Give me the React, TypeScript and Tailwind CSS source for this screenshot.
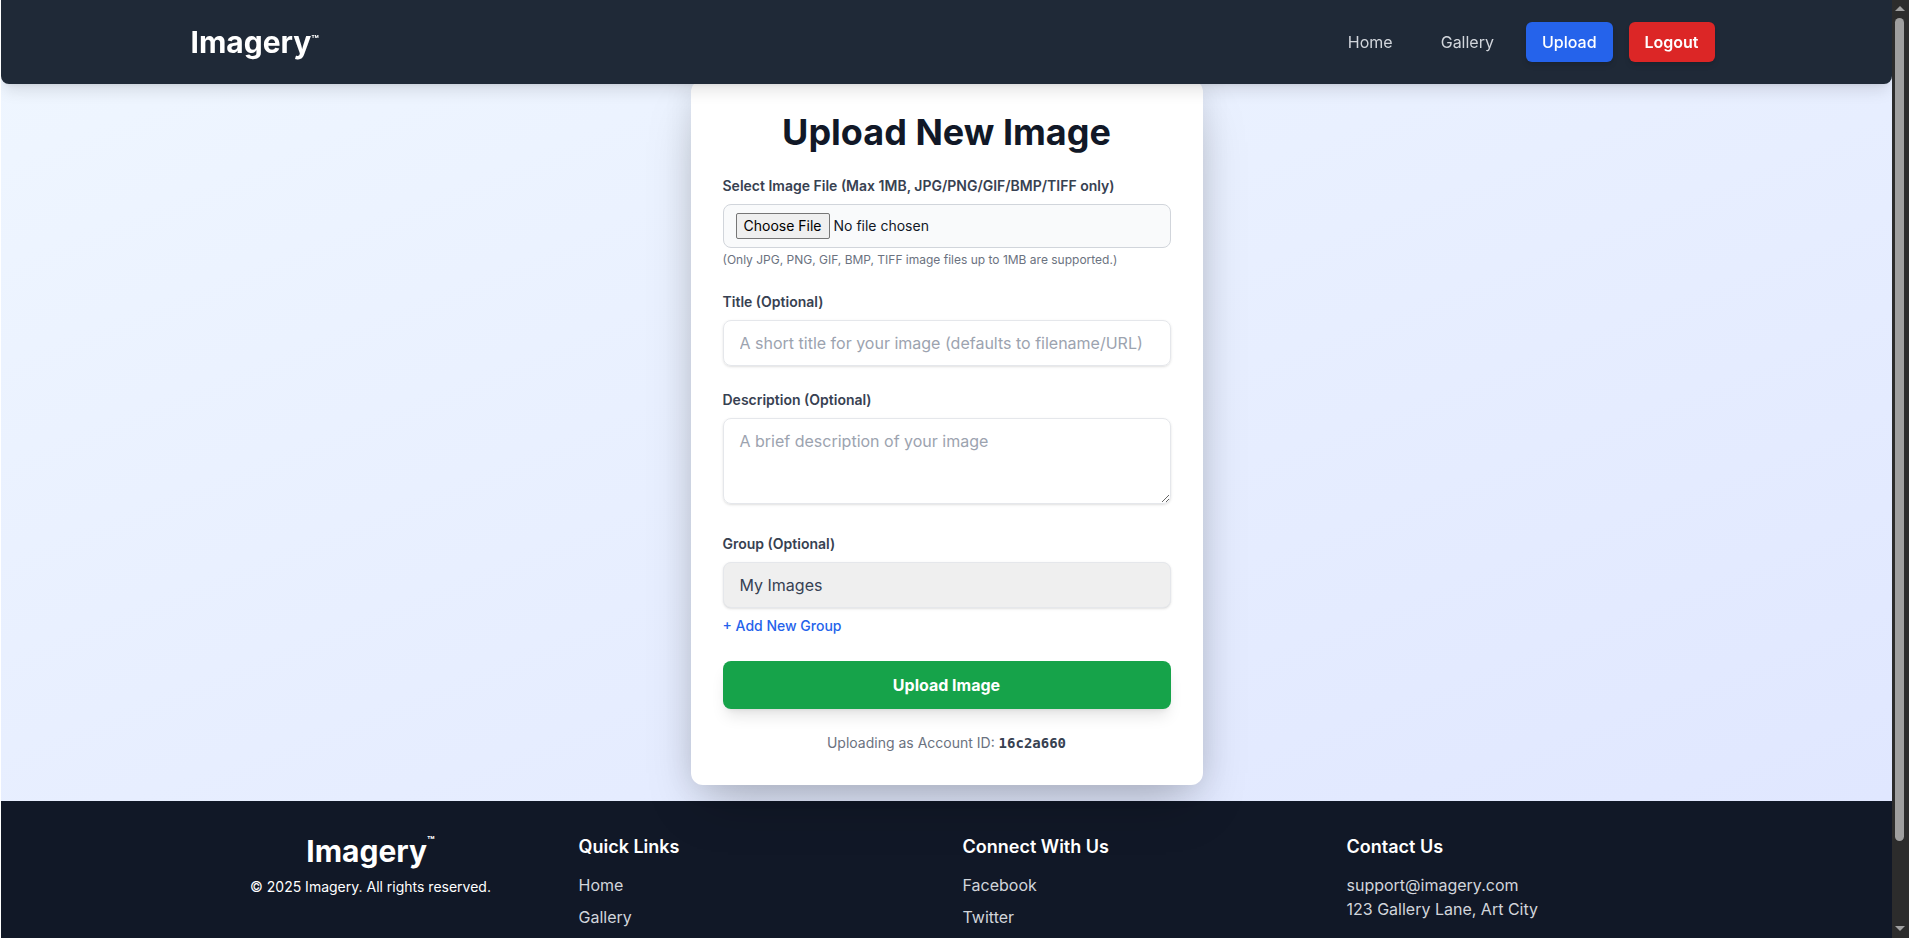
import type { ReactNode } from "react";

const field =
  "w-full rounded-lg border border-[#e5e7eb] px-4 py-3 text-base leading-5 text-gray-700 shadow-[0_1px_3px_0_rgba(0,0,0,0.1),0_1px_2px_-1px_rgba(0,0,0,0.1)] placeholder:text-[#9ca3af]";

function Label({ htmlFor, children }: { htmlFor: string; children: ReactNode }) {
  return (
    <label htmlFor={htmlFor} className="mb-2 block text-sm font-semibold text-[#374151]">
      {children}
    </label>
  );
}

function Header() {
  return (
    <header className="sticky top-0 z-10 rounded-b-lg bg-[#1f2937] py-[22px] shadow-[0_10px_15px_-3px_rgba(0,0,0,0.1),0_4px_6px_-4px_rgba(0,0,0,0.1)]">
      <div className="mx-auto flex max-w-[1536px] items-center justify-between">
        <a href="#" className="flex items-center px-3 text-3xl font-bold text-white">
          Imagery<span className="pb-1 text-xs leading-3">™</span>
        </a>
        <nav className="flex items-center gap-4 text-base">
          <a href="#home" className="rounded-md px-4 py-2 text-[#d1d5db]">Home</a>
          <a href="#gallery" className="rounded-md px-4 py-2 text-[#d1d5db]">Gallery</a>
          <a href="#upload" className="rounded-md bg-[#2563eb] px-4 py-2 font-medium text-white shadow-md">Upload</a>
          <button type="button" className="rounded-md bg-[#dc2626] px-4 py-2 font-semibold text-white shadow-md">Logout</button>
        </nav>
      </div>
    </header>
  );
}

function UploadCard() {
  return (
    <section className="w-full max-w-lg rounded-xl bg-white p-8 shadow-[0_25px_50px_-12px_rgba(0,0,0,0.25),0_0_30px_0_rgba(0,0,0,0.08)]">
      <h1 className="mb-6 text-center text-4xl font-bold text-[#111827]">Upload New Image</h1>
      <form className="flex flex-col gap-6">
        <div>
          <Label htmlFor="file">Select Image File (Max 1MB, JPG/PNG/GIF/BMP/TIFF only)</Label>
          <input
            id="file"
            type="file"
            className="block w-full rounded-lg border border-[#d1d5db] bg-[#f9fafb] px-3 py-2 text-sm text-[#111827] file:mr-1 file:rounded-[2px] file:border file:border-[#767676] file:bg-[#efefef] file:px-[7px] file:py-[2px] file:text-black"
          />
          <p className="mt-1 text-xs text-[#6b7280]">
            (Only JPG, PNG, GIF, BMP, TIFF image files up to 1MB are supported.)
          </p>
        </div>
        <div>
          <Label htmlFor="title">Title (Optional)</Label>
          <input id="title" type="text" placeholder="A short title for your image (defaults to filename/URL)" className={`block ${field}`} />
        </div>
        <div className="pb-[6px]">
          <Label htmlFor="description">Description (Optional)</Label>
          <textarea id="description" rows={3} placeholder="A brief description of your image" className={`block ${field}`} />
        </div>
        <div>
          <Label htmlFor="group">Group (Optional)</Label>
          <select id="group" className={`block appearance-none bg-[#efefef] ${field}`}>
            <option>My Images</option>
          </select>
          <button type="button" className="mt-2 block pb-px text-sm font-medium text-[#2563eb]">+ Add New Group</button>
        </div>
        <button
          type="submit"
          className="w-full rounded-lg bg-[#16a34a] py-3 text-base font-bold text-white shadow-[0_10px_15px_-3px_rgba(0,0,0,0.1),0_4px_6px_-4px_rgba(0,0,0,0.1)]"
        >
          Upload Image
        </button>
      </form>
      <p className="mt-6 text-center text-sm text-[#6b7280]">
        Uploading as Account ID:{" "}
        <span className="font-['DejaVu_Sans_Mono',monospace] font-bold text-[#374151]">16c2a660</span>
      </p>
    </section>
  );
}

function LinkColumn({ title, links }: { title: string; links: string[] }) {
  return (
    <div>
      <h2 className="mb-3 text-lg font-semibold">{title}</h2>
      <ul className="space-y-2">
        {links.map((link) => (
          <li key={link}>
            <a href="#" className="text-[#d1d5db]">{link}</a>
          </li>
        ))}
      </ul>
    </div>
  );
}

function Footer() {
  return (
    <footer className="bg-[#111827] py-8 text-white">
      <div className="mx-auto grid max-w-[1536px] grid-cols-4 gap-8 px-4">
        <div className="text-center">
          <div className="flex justify-center text-3xl font-bold">
            Imagery<span className="text-xs leading-4">™</span>
          </div>
          <p className="mt-2 text-sm">© 2025 Imagery. All rights reserved.</p>
        </div>
        <LinkColumn title="Quick Links" links={["Home", "Gallery"]} />
        <LinkColumn title="Connect With Us" links={["Facebook", "Twitter"]} />
        <div>
          <h2 className="mb-3 text-lg font-semibold">Contact Us</h2>
          <p className="text-[#d1d5db]">support@imagery.com</p>
          <p className="text-[#d1d5db]">123 Gallery Lane, Art City</p>
        </div>
      </div>
    </footer>
  );
}

function ScrollTrack() {
  return (
    <div aria-hidden="true" className="flex w-[17px] shrink-0 flex-col items-center bg-[#2c2c2c] pr-[2px]">
      <svg width="10" height="18" viewBox="0 0 10 18" fill="#a0a0a0">
        <path d="M5 6l5 5H0z" />
      </svg>
      <div className="flex min-h-0 w-full grow flex-col items-center">
        <div className="h-[91%] w-[9px] rounded-full bg-[#9f9f9f]" />
      </div>
      <svg width="10" height="16" viewBox="0 0 10 16" fill="#a0a0a0">
        <path d="M0 4h10l-5 5z" />
      </svg>
    </div>
  );
}

export default function App() {
  return (
    <div className="flex h-screen bg-white pl-px font-[Inter,sans-serif]">
      <div className="min-w-0 grow overflow-y-auto [scrollbar-width:none]">
        <Header />
        <main className="-mt-5 flex justify-center bg-gradient-to-br from-[#eff6ff] to-[#e0e7ff] px-4 pt-4 pb-4">
          <UploadCard />
        </main>
        <Footer />
      </div>
      <ScrollTrack />
    </div>
  );
}
